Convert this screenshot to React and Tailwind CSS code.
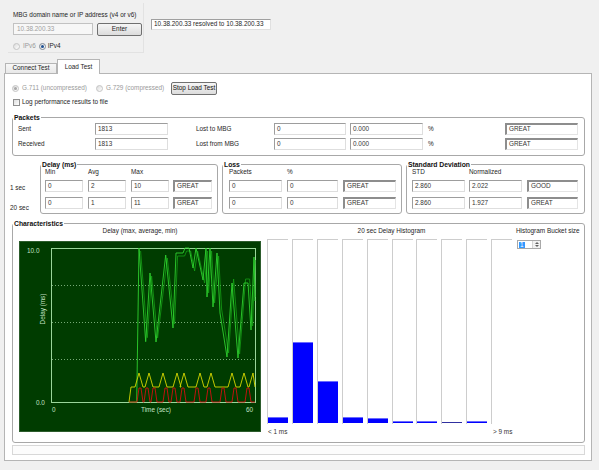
import React from "react";

const Radio = ({ checked, disabled }) => (
  <span
    className={`w-[7px] h-[7px] rounded-full border flex items-center justify-center bg-linear-to-br from-[#dcdcdc] to-white ${
      disabled ? "border-[#c4c4c4]" : "border-[#7f8a96]"
    }`}
  >
    {checked && (
      <span className={`w-[3px] h-[3px] rounded-full ${disabled ? "bg-[#a8a8a8]" : "bg-[#1d4f91]"}`} />
    )}
  </span>
);

const Field = ({ className, children }) => (
  <div
    className={`h-[12px] bg-white border border-t-[#9d9d9d] border-l-[#9d9d9d] border-r-[#dedede] border-b-[#dedede] pl-[2px] flex items-center text-[#333] ${className}`}
  >
    {children}
  </div>
);

const Rating = ({ className, children }) => (
  <div
    className={`h-[12px] bg-white border-t-2 border-l-2 border-r border-b border-t-[#8d8d8d] border-l-[#8d8d8d] border-r-[#e4e4e4] border-b-[#e4e4e4] pl-[2px] flex items-center text-[#333] ${className}`}
  >
    {children}
  </div>
);

const Group = ({ title, className, children }) => (
  <fieldset className={`border border-[#a8a8a8] rounded-[3px] ${className}`}>
    <legend className="px-[1px] font-bold text-[6.8px] leading-[7px] text-[#111]">{title}</legend>
    {children}
  </fieldset>
);

// chart series, plot coords inside the 242x191 chart
const maxPoints = [
  [110, 161], [117.7, 161], [120, 7], [126.7, 100.7], [131, 32], [137, 101], [146.7, 14], [154, 87],
  [157, 12], [164, 12], [166, 7], [170, 7], [174, 27], [177, 7], [184, 39], [187, 7], [188, 56],
  [191, 7], [194, 66], [198, 12], [201, 72], [208, 116], [213, 42], [219, 117], [225, 42], [229, 42],
  [232, 89], [235, 16], [236, 60],
];
const toPts = (pts) => pts.map(([x, y]) => `${x},${y}`).join(" ");
const maxSeries = toPts(maxPoints);
const maxShadow = toPts(
  maxPoints.slice(2).map(([x, y]) => [Math.min(236, x + 1.6), y < 40 ? y + 3 : y - 4])
);

const triangles = (peaks, base, top, half, flat) => {
  const pts = [[110, 161], [flat ? 114 : 112, base]];
  peaks.forEach((p) => {
    pts.push([p - half, base], [p - flat, top], [p + flat, top], [p + half, base]);
  });
  pts.push([236, base]);
  return pts
    .filter(([x]) => x <= 236)
    .map(([x, y]) => `${x},${y}`)
    .join(" ");
};

const avgSeries = triangles([120, 130, 144, 158, 165, 181, 192, 213, 225, 234], 146, 132, 4, 0);
const minSeries = triangles([121, 128, 135, 147, 155, 164, 178, 190, 204, 216, 229], 161, 147, 3, 1);

const DelayChart = () => (
  <div className="w-[242px] h-[191px] bg-[#003c00] border border-[#2c5c2c]">
    <svg width="240" height="189" viewBox="1 1 240 189" className="block">
      <rect x="32.5" y="7.5" width="204" height="154" fill="none" stroke="#9ad69a" strokeWidth="1" />
      {[44.5, 81.5, 118.5].map((y) => (
        <line key={y} x1="33" x2="236" y1={y} y2={y} stroke="#a8d8a8" strokeWidth="0.7" strokeDasharray="1 2" />
      ))}
      <polyline points={maxShadow} fill="none" stroke="#14a014" strokeWidth="0.8" />
      <polyline points={maxSeries} fill="none" stroke="#2fd02f" strokeWidth="0.9" />
      <polyline points={avgSeries} fill="none" stroke="#d8d800" strokeWidth="0.9" />
      <polyline points={minSeries} fill="none" stroke="#d01010" strokeWidth="0.9" />
      <g fontFamily="'Liberation Sans', Arial, sans-serif" fontSize="6.4" fill="#c4e2c4">
        <text x="8" y="11.5">10.0</text>
        <text x="17" y="163.5">0.0</text>
        <text x="33" y="170.5">0</text>
        <text x="137" y="170.5" textAnchor="middle">Time (sec)</text>
        <text x="227" y="170.5">60</text>
        <text x="26" y="68" textAnchor="middle" transform="rotate(-90 26 68)">Delay (ms)</text>
      </g>
    </svg>
  </div>
);

const buckets = [6, 81, 42, 6, 5, 2, 2, 1, 2, 0];

const Histogram = () => (
  <div className="w-[249px]">
    <div className="h-[7px] mt-[1px] flex items-center justify-center">20 sec Delay Histogram</div>
    <div className="mt-[4px] h-[185px] flex">
      {buckets.map((h, i) => (
        <div key={i} className="w-[25px] h-full">
          <div className="w-[21px] h-full border-l border-t border-[#cdcdcd] flex items-end pb-[1px]">
            {h > 0 && (
              <div
                className={`w-[20px] border-t ${i === 7 ? "bg-[#00008a] border-[#3030a0]" : "bg-[#0000ff] border-[#6a6aff]"}`}
                style={{ height: h }}
              />
            )}
          </div>
        </div>
      ))}
    </div>
    <div className="mt-[5px] h-[7px] flex items-center text-[#333]">
      <span className="w-[226px] pl-[1px]">&lt; 1 ms</span>
      <span>&gt; 9 ms</span>
    </div>
  </div>
);

const BucketSize = () => (
  <div className="w-[64px]">
    <div className="h-[7px] mt-[1px] flex items-center">Histogram Bucket size</div>
    <div className="mt-[5px] ml-[1px] w-[24px] h-[9px] flex border border-[#a9a9a9] bg-white">
      <div className="flex-1 flex items-center pl-[1px]">
        <span className="bg-[#3399ff] text-white px-[1px] leading-[6px]">1</span>
      </div>
      <div className="w-[8px] border-l border-[#d4d4d4] bg-[#f2f2f2] flex flex-col items-center justify-center gap-[1px]">
        <svg width="4" height="2" viewBox="0 0 4 2" className="block">
          <path d="M0 2 L2 0 L4 2 Z" fill="#606060" />
        </svg>
        <svg width="4" height="2" viewBox="0 0 4 2" className="block">
          <path d="M0 0 L2 2 L4 0 Z" fill="#606060" />
        </svg>
      </div>
    </div>
  </div>
);

export default function App() {
  return (
    <div className="w-[599px] h-[470px] overflow-hidden bg-[#f0f0f0] font-['Liberation_Sans',Arial,sans-serif] text-[6.4px] leading-none text-[#1e1e1e]">
      {/* MBG connection */}
      <div className="flex pl-[8px] pt-[3px]">
        <div className="w-[136px] h-[50px] pl-[5px] pt-[9px] border-r border-b border-[#e2e2e2]">
          <div className="h-[7px] flex items-center">MBG domain name or IP address (v4 or v6)</div>
          <div className="mt-[4px] flex items-start">
            <div className="w-[80px] h-[12px] bg-[#f7f7f7] border border-[#c2c2c2] pl-[3px] flex items-center text-[#a0a0a0]">
              10.38.200.33
            </div>
            <button className="ml-[4px] w-[45px] h-[13px] rounded-[2px] border border-[#707070] bg-linear-to-b from-[#f6f6f6] to-[#dcdcdc] flex items-center justify-center text-[#1e1e1e]">
              Enter
            </button>
          </div>
          <div className="mt-[5px] h-[10px] flex items-center">
            <Radio disabled />
            <span className="ml-[3px] text-[#9a9a9a]">IPv6</span>
            <span className="ml-[3px]">
              <Radio checked />
            </span>
            <span className="ml-[2px]">IPv4</span>
          </div>
        </div>
        <div className="ml-[7px] mt-[16px] w-[120px] h-[11px] bg-white border border-t-[#a0a0a0] border-l-[#a0a0a0] border-r-[#e0e0e0] border-b-[#e0e0e0] pl-[2px] flex items-center">
          10.38.200.33 resolved to 10.38.200.33
        </div>
      </div>

      {/* tabs */}
      <div className="mt-[6px] pl-[5px] h-[14px] flex items-end relative z-10">
        <div className="w-[52px] h-[10px] border border-b-0 border-[#b5b5b5] bg-linear-to-b from-[#f7f7f7] to-[#e8e8e8] flex items-center justify-center">
          Connect Test
        </div>
        <div className="w-[43px] h-[15px] -mb-px border border-b-0 border-[#b5b5b5] bg-white flex items-start pt-[4px] justify-center">
          Load Test
        </div>
      </div>

      {/* tab panel */}
      <div className="ml-[4px] w-[588px] h-[388px] border border-[#b5b5b5] bg-white pl-[7px]">
        <div className="mt-[8px] h-[13px] flex items-center">
          <div className="w-[84px] flex items-center">
            <Radio checked disabled />
            <span className="ml-[3px] text-[#9a9a9a]">G.711 (uncompressed)</span>
          </div>
          <div className="w-[75px] flex items-center">
            <Radio disabled />
            <span className="ml-[3px] text-[#9a9a9a]">G.729 (compressed)</span>
          </div>
          <button className="w-[46px] h-[13px] rounded-[2px] border border-[#707070] bg-linear-to-b from-[#f6f6f6] to-[#dcdcdc] flex items-center justify-center text-[#111]">
            Stop Load Test
          </button>
        </div>
        <div className="mt-[4px] h-[7px] flex items-center">
          <span className="ml-[1px] w-[7px] h-[7px] border border-[#8f8f8f] bg-linear-to-br from-[#dedede] to-white" />
          <span className="ml-[2px]">Log performance results to file</span>
        </div>

        {/* Packets */}
        <Group title="Packets" className="mt-[8px] w-[573px] pb-[5px]">
          <div className="mt-[2px] pl-[5px] h-[12px] flex items-center">
            <span className="w-[77px]">Sent</span>
            <Field className="w-[73px]">1813</Field>
            <span className="ml-[28px] w-[78px]">Lost to MBG</span>
            <Field className="w-[72px]">0</Field>
            <Field className="ml-[4px] w-[73px]">0.000</Field>
            <span className="ml-[5px] w-[77px]">%</span>
            <Rating className="w-[73px]">GREAT</Rating>
          </div>
          <div className="mt-[3px] pl-[5px] h-[12px] flex items-center">
            <span className="w-[77px]">Received</span>
            <Field className="w-[73px]">1813</Field>
            <span className="ml-[28px] w-[78px]">Lost from MBG</span>
            <Field className="w-[72px]">0</Field>
            <Field className="ml-[4px] w-[73px]">0.000</Field>
            <span className="ml-[5px] w-[77px]">%</span>
            <Rating className="w-[73px]">GREAT</Rating>
          </div>
        </Group>

        {/* Delay / Loss / Standard deviation */}
        <div className="mt-[5px] flex items-start">
          <div className="-ml-[2px] w-[30px]">
            <div className="mt-[24px] h-[7px] flex items-center">1 sec</div>
            <div className="mt-[13px] h-[7px] flex items-center">20 sec</div>
          </div>
          <Group title="Delay (ms)" className="w-[178px] pb-[4px]">
            <div className="pl-[4px] mt-[1px] h-[7px] flex items-center">
              <span className="w-[43px]">Min</span>
              <span className="w-[43px]">Avg</span>
              <span>Max</span>
            </div>
            <div className="pl-[4px] mt-[4px] flex gap-[5px]">
              <Field className="w-[38px]">0</Field>
              <Field className="w-[38px]">2</Field>
              <Field className="w-[38px]">10</Field>
              <Rating className="-ml-[1px] w-[39px]">GREAT</Rating>
            </div>
            <div className="pl-[4px] mt-[5px] flex gap-[5px]">
              <Field className="w-[38px]">0</Field>
              <Field className="w-[38px]">1</Field>
              <Field className="w-[38px]">11</Field>
              <Rating className="-ml-[1px] w-[39px]">GREAT</Rating>
            </div>
          </Group>
          <Group title="Loss" className="ml-[4px] w-[180px] pb-[4px]">
            <div className="pl-[6px] mt-[1px] h-[7px] flex items-center">
              <span className="w-[58px]">Packets</span>
              <span>%</span>
            </div>
            <div className="pl-[6px] mt-[4px] flex gap-[5px]">
              <Field className="w-[53px]">0</Field>
              <Field className="w-[51px]">0</Field>
              <Rating className="w-[53px]">GREAT</Rating>
            </div>
            <div className="pl-[6px] mt-[5px] flex gap-[5px]">
              <Field className="w-[53px]">0</Field>
              <Field className="w-[51px]">0</Field>
              <Rating className="w-[53px]">GREAT</Rating>
            </div>
          </Group>
          <Group title="Standard Deviation" className="ml-[4px] w-[179px] pb-[4px]">
            <div className="pl-[5px] mt-[1px] h-[7px] flex items-center">
              <span className="w-[57px]">STD</span>
              <span>Normalized</span>
            </div>
            <div className="pl-[5px] mt-[4px] flex gap-[4px]">
              <Field className="w-[53px]">2.860</Field>
              <Field className="w-[53px]">2.022</Field>
              <Rating className="ml-[1px] w-[51px]">GOOD</Rating>
            </div>
            <div className="pl-[5px] mt-[5px] flex gap-[4px]">
              <Field className="w-[53px]">2.860</Field>
              <Field className="w-[53px]">1.927</Field>
              <Rating className="ml-[1px] w-[51px]">GREAT</Rating>
            </div>
          </Group>
        </div>

        {/* Characteristics */}
        <Group title="Characteristics" className="mt-[6px] w-[573px] h-[223px]">
          <div className="pl-[6px] flex items-start">
            <div className="w-[242px]">
              <div className="h-[7px] mt-[1px] flex items-center justify-center">Delay (max, average, min)</div>
              <div className="mt-[6px]">
                <DelayChart />
              </div>
            </div>
            <div className="ml-[6px]">
              <Histogram />
            </div>
            <BucketSize />
          </div>
        </Group>

        <div className="mt-[2px] w-[573px] h-[10px] border border-[#d8d8d8] bg-[#fcfcfc]" />
      </div>
    </div>
  );
}
